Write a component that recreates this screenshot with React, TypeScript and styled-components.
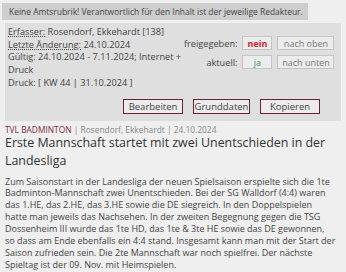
import React from 'react';
import styled, { createGlobalStyle } from 'styled-components';

const Global = createGlobalStyle`
  html, body { margin: 0; padding: 0; background: #efefef; }
  body { font-family: "Open Sans", "DejaVu Sans", sans-serif; color: #444; }
  * { box-sizing: border-box; }
`;

const Page = styled.div`
  width: 346px;
  padding: 3px 5px 0 5px;
  display: flex;
  flex-direction: column;
  align-items: flex-start;
`;

const Notice = styled.div`
  background: #cecece;
  font-size: 8.45px;
  line-height: 17px;
  padding: 0 5px 0 7px;
  margin-left: -3px;
  white-space: nowrap;
`;

const Panel = styled.div`
  align-self: stretch;
  margin-top: 3px;
  background: #dfdfdf;
  padding: 3px 8px 7px 3px;
  display: flex;
  flex-direction: column;
`;

const TopRow = styled.div`
  display: flex;
  justify-content: space-between;
  align-items: flex-start;
`;

const Info = styled.div`
  flex: 0 0 176px;
  font-size: 9.2px;
  line-height: 12.7px;
`;

const Term = styled.span`
  text-decoration: underline;
  text-decoration-style: dotted;
  text-underline-offset: 1px;
`;

const StatusGrid = styled.div`
  margin-top: 10px;
  display: grid;
  grid-template-columns: auto 30px 57px;
  column-gap: 5px;
  row-gap: 5px;
  align-items: center;
`;

const Label = styled.span`
  font-size: 9.2px;
  text-align: right;
  white-space: nowrap;
`;

const StateBox = styled.span<{ $tone: 'red' | 'green' | 'plain' }>`
  height: 14px;
  display: flex;
  align-items: center;
  justify-content: center;
  border: 1px solid #c4c4c4;
  background: #ececec;
  font-size: 9px;
  white-space: nowrap;
  font-weight: ${p => (p.$tone === 'red' ? 700 : 400)};
  color: ${p => (p.$tone === 'red' ? '#d0242c' : p.$tone === 'green' ? '#3f9a55' : '#777')};
`;

const Actions = styled.div`
  margin-top: 9px;
  padding-right: 13px;
  display: flex;
  justify-content: flex-end;
  gap: 10px;
`;

const ActionButton = styled.button<{ $w: number }>`
  width: ${p => p.$w}px;
  height: 15px;
  padding: 0;
  border: 1px solid #6e1f35;
  background: #ececec;
  color: #444;
  font-family: inherit;
  font-size: 9.5px;
  line-height: 13px;
`;

const Byline = styled.div`
  margin-top: 4px;
  font-size: 8.4px;
  line-height: 9px;
  color: #888;
`;

const Dept = styled.span`
  color: #7d2a42;
`;

const Title = styled.h1`
  margin: 0;
  font-size: 12.4px;
  line-height: 18px;
  font-weight: 400;
  color: #333;
`;

const Body = styled.p`
  margin: 6px 0 0 0;
  font-size: 9px;
  line-height: 11.9px;
  color: #444;
`;

export default function App() {
  return (
    <>
      <Global />
      <Page>
        <Notice>Keine Amtsrubrik! Verantwortlich für den Inhalt ist der jeweilige Redakteur.</Notice>
        <Panel>
          <TopRow>
            <Info>
              <Term>Erfasser:</Term> Rosendorf, Ekkehardt [138]
              <br />
              <Term>Letzte Änderung:</Term> 24.10.2024
              <br />
              Gültig: 24.10.2024 - 7.11.2024; Internet + Druck
              <br />
              Druck: [ KW 44 | 31.10.2024 ]
            </Info>
            <StatusGrid>
              <Label>freigegeben:</Label>
              <StateBox $tone="red">nein</StateBox>
              <StateBox $tone="plain">nach oben</StateBox>
              <Label>aktuell:</Label>
              <StateBox $tone="green">ja</StateBox>
              <StateBox $tone="plain">nach unten</StateBox>
            </StatusGrid>
          </TopRow>
          <Actions>
            <ActionButton $w={60}>Bearbeiten</ActionButton>
            <ActionButton $w={57}>Grunddaten</ActionButton>
            <ActionButton $w={60}>Kopieren</ActionButton>
          </Actions>
        </Panel>
        <Byline>
          <Dept>TVL BADMINTON</Dept> | Rosendorf, Ekkehardt | 24.10.2024
        </Byline>
        <Title>Erste Mannschaft startet mit zwei Unentschieden in der Landesliga</Title>
        <Body>
          Zum Saisonstart in der Landesliga der neuen Spielsaison erspielte sich die 1te
          <br />
          Badminton-Mannschaft zwei Unentschieden. Bei der SG Walldorf (4:4) waren
          <br />
          das 1.HE, das 2.HE, das 3.HE sowie die DE siegreich. In den Doppelspielen
          <br />
          hatte man jeweils das Nachsehen. In der zweiten Begegnung gegen die TSG
          <br />
          Dossenheim III wurde das 1te HD, das 1te &amp; 3te HE sowie das DE gewonnen,
          <br />
          so dass am Ende ebenfalls ein 4:4 stand. Insgesamt kann man mit der Start der
          <br />
          Saison zufrieden sein. Die 2te Mannschaft war noch spielfrei. Der nächste
          <br />
          Spieltag ist der 09. Nov. mit Heimspielen.
        </Body>
      </Page>
    </>
  );
}
